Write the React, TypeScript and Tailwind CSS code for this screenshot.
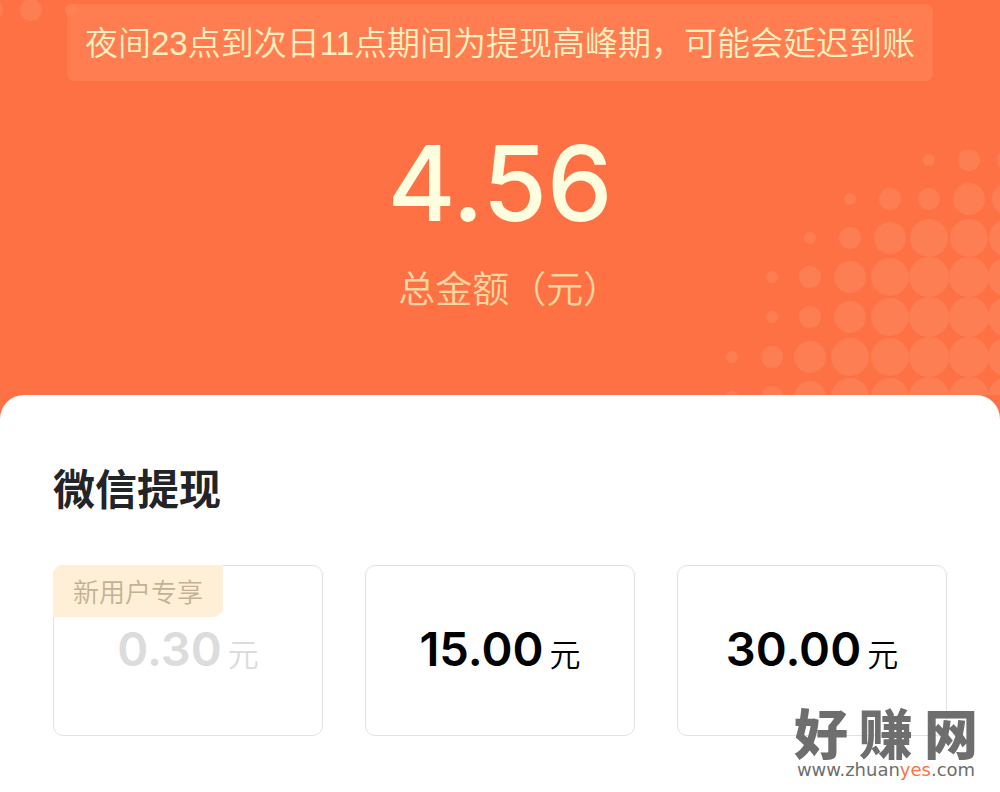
import { useState } from "react"

interface WithdrawOption {
  amount: string
  tag?: string
  disabled?: boolean
}

const options: WithdrawOption[] = [
  { amount: "0.30", tag: "新用户专享", disabled: true },
  { amount: "15.00" },
  { amount: "30.00" },
]

// [cx, cy, r] of the halftone dots behind the balance
const cornerDots = [
  [209, 10, 6], [249, 10, 11], [288, 10, 11],
  [130, 49, 6], [170, 49, 11], [209, 49, 11], [249, 49, 16], [288, 49, 16],
  [90, 88, 6], [130, 88, 11], [170, 88, 16], [209, 88, 19], [249, 88, 19], [288, 88, 19],
  [52, 127, 6], [90, 127, 11], [130, 127, 16], [170, 127, 19], [209, 127, 20], [249, 127, 20], [288, 127, 20],
  [52, 167, 6], [90, 167, 11], [130, 167, 16], [170, 167, 19], [209, 167, 20], [249, 167, 20], [288, 167, 20],
  [12, 207, 6], [52, 207, 11], [90, 207, 16], [130, 207, 19], [170, 207, 19], [209, 207, 20], [249, 207, 20], [288, 207, 20],
  [12, 247, 6], [52, 247, 11], [90, 247, 16], [130, 247, 19], [170, 247, 19], [209, 247, 20], [249, 247, 20], [288, 247, 20],
]

const topDots = [[-8, 10, 11], [31, 10, 11], [71, 10, 6]]

function Dots({ dots }: { dots: number[][] }) {
  return (
    <>
      {dots.map(([cx, cy, r]) => (
        <circle key={`${cx}-${cy}`} cx={cx} cy={cy} r={r} />
      ))}
    </>
  )
}

function BalanceHeader() {
  return (
    <header className="relative overflow-hidden pt-1 pb-20 text-center">
      <svg className="absolute left-0 top-0 fill-[#fd7e53]" width="90" height="30" aria-hidden="true">
        <Dots dots={topDots} />
      </svg>
      <svg className="absolute right-0 bottom-0 fill-[#fd7e53]" width="280" height="245" aria-hidden="true">
        <Dots dots={cornerDots} />
      </svg>

      <p className="relative mx-[67px] rounded-lg bg-[#ff8356]/70 pt-[14px] pb-[11px] font-['Liberation_Sans','Noto_Sans_CJK_SC',sans-serif] text-[33px] leading-[52px] font-[350] whitespace-nowrap text-[#fff0c0]">
        夜间23点到次日11点期间为提现高峰期，可能会延迟到账
      </p>
      <p className="relative mt-[50px] font-[Inter,sans-serif] text-[104px] leading-[104px] font-medium text-[#ffffdf]">
        4.56
      </p>
      <p className="relative mt-6 text-[37px] leading-[56px] font-[350] text-[#ffd5a0]">
        总金额（元<span className="[font-feature-settings:'halt']">）</span>
      </p>
    </header>
  )
}

interface OptionCardProps {
  option: WithdrawOption
  selected: boolean
  onSelect: () => void
}

function OptionCard({ option, selected, onSelect }: OptionCardProps) {
  return (
    <button
      type="button"
      disabled={option.disabled}
      aria-pressed={selected}
      onClick={onSelect}
      className="relative flex h-[171px] items-center justify-center rounded-[10px] border border-[#e2e2e2] text-black disabled:text-[#dcdcdc]"
    >
      {option.tag && (
        <span className="absolute -top-px -left-px rounded-tl-[10px] rounded-br-[10px] bg-[#ffefd6] px-5 text-[26px] leading-[52px] font-[350] text-[#c4b195]">
          {option.tag}
        </span>
      )}
      <span className="flex items-baseline gap-[6px]">
        <span className="font-[Inter,sans-serif] text-[47px] leading-[56px] font-semibold">{option.amount}</span>
        <span className="text-[31px] leading-[56px] font-[350]">元</span>
      </span>
    </button>
  )
}

function SiteMark() {
  return (
    <div className="absolute right-[22px] bottom-[13px] w-[184px] text-[#6e6e6e]">
      <div className="flex justify-between text-[54px] leading-[46px] font-black">
        <span>好</span>
        <span>赚</span>
        <span>网</span>
      </div>
      <div className="mt-[6px] text-center font-['DejaVu_Sans',sans-serif] text-[18px] leading-[18px]">
        www.zhuan<span className="text-[#ff7043]">yes</span>.com
      </div>
    </div>
  )
}

export default function App() {
  const [selected, setSelected] = useState<string | null>(null)

  return (
    <div className="flex min-h-screen flex-col bg-[#fe7145] font-['Noto_Sans_CJK_SC',sans-serif]">
      <BalanceHeader />
      <main className="relative flex-1 rounded-t-3xl bg-white px-[53px] pt-[62px] pb-14">
        <h1 className="text-[42px] leading-[60px] font-bold text-[#222428]">微信提现</h1>
        <div className="mt-12 grid grid-cols-3 gap-[42px]">
          {options.map((option) => (
            <OptionCard
              key={option.amount}
              option={option}
              selected={selected === option.amount}
              onSelect={() => setSelected(option.amount)}
            />
          ))}
        </div>
        <SiteMark />
      </main>
    </div>
  )
}
